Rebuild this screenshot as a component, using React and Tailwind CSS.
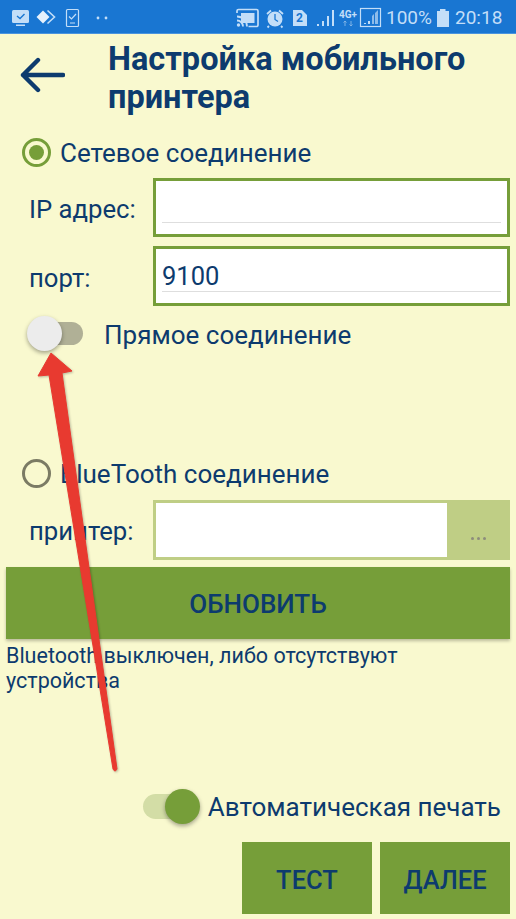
import React from 'react';

const StatusBar = () => (
  <div className="flex h-[34px] w-full shrink-0 items-center border-b border-[#4a94de] bg-[#1976d2] text-[#c3def8]">
    <svg width="516" height="34" viewBox="0 0 516 34" className="absolute left-0 top-0" fill="none">
      {/* monitor with check */}
      <rect x="12" y="10" width="17" height="13" rx="1.5" fill="#c3def8" />
      <rect x="16" y="24.5" width="9" height="1.5" fill="#c3def8" />
      <path d="M17 16l3 2.5 4.5-4.5" stroke="#1976d2" strokeWidth="1.4" />
      {/* diamond and chevron */}
      <path d="M43 10.5l6.5 6.5-6.5 6.5-6.5-6.5z" fill="#e6f1fc" />
      <path d="M47.5 10.5l7 6.5-7 6.5" stroke="#c3def8" strokeWidth="1.6" />
      {/* tablet with check */}
      <rect x="66.5" y="9.5" width="12" height="17" rx="1" stroke="#c3def8" strokeWidth="1.2" />
      <path d="M69 16.5l2.5 2.5 4.5-5" stroke="#c3def8" strokeWidth="1.2" />
      <rect x="70" y="22.5" width="5" height="1" fill="#c3def8" />
      <circle cx="98" cy="18" r="1.4" fill="#c3def8" />
      <circle cx="106" cy="18" r="1.4" fill="#c3def8" />
      {/* cast */}
      <path d="M237 13v-2a1.5 1.5 0 0 1 1.5-1.5h18a1.5 1.5 0 0 1 1.5 1.5v14a1.5 1.5 0 0 1-1.5 1.5h-8" stroke="#c3def8" strokeWidth="1.7" />
      <rect x="241" y="13" width="13.5" height="10" fill="#c3def8" />
      <path d="M237 16.5a10 10 0 0 1 10 10M237 20.5a6 6 0 0 1 6 6" stroke="#c3def8" strokeWidth="1.8" />
      <circle cx="238.5" cy="25" r="1.7" fill="#c3def8" />
      {/* alarm */}
      <circle cx="275" cy="19" r="7.5" fill="#c3def8" />
      <path d="M275 14v5.5l3 2" stroke="#1976d2" strokeWidth="1.3" />
      <path d="M267 14l4-3.5M283 14l-4-3.5M269 26l-1.5 1.5M281 26l1.5 1.5" stroke="#c3def8" strokeWidth="1.8" />
      {/* sim 2 */}
      <path d="M293 10h9l5 5v11h-14z" fill="#c3def8" />
      {/* signal */}
      <g fill="#c3def8">
        <rect x="317" y="24" width="2" height="2" />
        <rect x="322" y="21" width="2" height="5" />
        <rect x="327" y="16" width="2" height="10" />
        <rect x="332" y="10" width="2" height="16" />
      </g>
      {/* data arrows */}
      <path d="M345 26v-5M343.5 22.5l1.5-1.5 1.5 1.5M351 21v5M349.5 24.5l1.5 1.5 1.5-1.5" stroke="#7fb3e6" strokeWidth="1" />
      {/* boxed signal */}
      <rect x="360.5" y="8.5" width="20" height="18" stroke="#c3def8" strokeWidth="1.2" />
      <path d="M364 24h2v-1h-2zM368 24h2v-3h-2z" fill="#c3def8" />
      <path d="M372 24v-8l2-2v10zM375 24v-11l3-3v14z" fill="#8dbcea" />
      {/* battery */}
      <path d="M437 11h3v-2h5.5v2h3.5v16h-12z" fill="#c3def8" />
    </svg>
    <span className="absolute left-[292px] top-[11px] w-[15px] text-center text-[12px] font-bold leading-[15px] text-[#1976d2]">2</span>
    <span className="absolute left-[339px] top-[9px] text-[10px] font-bold leading-[11px] text-[#c3def8]">4G+</span>
    <span className="absolute left-[386px] top-[6px] text-[19px] leading-[24px]">100%</span>
    <span className="absolute left-[455px] top-[6px] text-[19px] leading-[24px]">20:18</span>
  </div>
);

const Radio = ({ checked, label }) => (
  <div className="flex items-center gap-[9px] pl-[22px]">
    {checked ? (
      <span className="flex h-[29px] w-[29px] items-center justify-center rounded-full border-[3px] border-[#769e39]">
        <span className="h-[15px] w-[15px] rounded-full bg-[#769e39]" />
      </span>
    ) : (
      <span className="h-[29px] w-[29px] rounded-full border-[3px] border-[#7b7b64]" />
    )}
    <span className="pt-[1px] text-[26px] leading-[30px]">{label}</span>
  </div>
);

const Field = ({ label, value, height }) => (
  <div className={`flex items-center pr-[6px] ${height}`}>
    <span className="w-[153px] pl-[29px] pt-[3px] text-[25.7px] leading-[30px]">{label}</span>
    <div className="flex h-full flex-1 border-[3px] border-[#769e39] bg-white px-[6px] pb-[11px]">
      <div className="flex h-full w-full items-end border-b border-[#dedede] text-[25.5px] leading-[30px]">{value}</div>
    </div>
  </div>
);

const ActionButton = ({ children, className }) => (
  <button type="button" className={`bg-[#769e39] font-medium uppercase text-[#0d3b6e] ${className}`}>
    {children}
  </button>
);

const App = () => (
  <div className="relative flex h-[919px] w-[516px] flex-col overflow-hidden bg-[#f9f9cf] font-[Roboto,sans-serif] text-[#0d3b6e]">
    <StatusBar />

    {/* Header */}
    <div className="flex h-[90px] pt-[6px]">
      <div className="w-[108px] pl-[20px] pt-[17px]">
        <svg width="45" height="36" viewBox="0 0 45 36" fill="none" stroke="#0d3b6e" strokeWidth="4.4" strokeLinecap="round" strokeLinejoin="round">
          <path d="M43 18H3M18 3L3 18l15 15" />
        </svg>
      </div>
      <h1 className="text-[32.5px] font-bold leading-[38px]">
        Настройка мобильного
        <br />
        принтера
      </h1>
    </div>

    {/* Network connection */}
    <div className="mt-[13px]">
      <Radio checked label="Сетевое соединение" />
    </div>
    <div className="mt-[10px] flex flex-col gap-[9px]">
      <Field label="IP адрес:" height="h-[59px]" />
      <Field label="порт:" value="9100" height="h-[60px]" />
    </div>

    {/* Direct connection toggle */}
    <div className="mt-[10px] flex h-[34px] items-center">
      <div className="relative ml-[44px] h-[23px] w-[39px] rounded-full bg-[#b0b096]">
        <span className="absolute left-[-17px] top-[-6px] h-[35px] w-[35px] rounded-full bg-[#ececec] shadow-[0_2px_4px_rgba(0,0,0,0.35)]" />
      </div>
      <span className="ml-[21px] pt-[3px] text-[26px] leading-[30px]">Прямое соединение</span>
    </div>

    {/* Bluetooth connection */}
    <div className="mt-[108px]">
      <Radio label="BlueTooth соединение" />
    </div>
    <div className="mt-[11px] flex h-[60px] items-center pr-[6px]">
      <span className="w-[153px] pl-[29px] pt-[2px] text-[25.7px] leading-[30px]">принтер:</span>
      <div className="flex h-full flex-1 bg-[#bfce85]">
        <div className="my-[3px] ml-[3px] flex-1 bg-white" />
        <div className="flex w-[63px] items-end justify-center gap-[3px] pb-[20px]">
          <span className="h-[3px] w-[3px] rounded-full bg-[#8d8d7c]" />
          <span className="h-[3px] w-[3px] rounded-full bg-[#8d8d7c]" />
          <span className="h-[3px] w-[3px] rounded-full bg-[#8d8d7c]" />
        </div>
      </div>
    </div>

    <div className="mt-[7px] px-[6px]">
      <ActionButton className="h-[72px] w-full pt-[3px] text-[26px] shadow-[0_2px_3px_rgba(0,0,0,0.25)]">Обновить</ActionButton>
      <p className="mt-[4px] text-[21.5px] leading-[25px]">
        Bluetooth выключен, либо отсутствуют
        <br />
        устройства
      </p>
    </div>

    {/* Auto print toggle */}
    <div className="mt-auto flex h-[35px] items-center justify-end pr-[15px]">
      <div className="relative h-[25px] w-[47px] rounded-full bg-[#d3dda6]">
        <span className="absolute right-[-10px] top-[-5px] h-[35px] w-[35px] rounded-full bg-[#769e39] shadow-[0_2px_4px_rgba(0,0,0,0.35)]" />
      </div>
      <span className="ml-[18px] pt-[1px] text-[26px] leading-[30px]">Автоматическая печать</span>
    </div>

    {/* Footer buttons */}
    <div className="mb-[5px] mt-[18px] flex justify-end gap-[8px] pr-[6px]">
      <ActionButton className="h-[72px] w-[130px] pt-[5px] text-[25.5px]">Тест</ActionButton>
      <ActionButton className="h-[72px] w-[130px] pt-[5px] text-[25.5px]">Далее</ActionButton>
    </div>

    {/* Red annotation arrow drawn over the screen */}
    <svg width="516" height="919" viewBox="0 0 516 919" className="pointer-events-none absolute left-0 top-0 drop-shadow-[1px_1px_1px_rgba(0,0,0,0.25)]">
      <path d="M51 353L72 371 62 373 117 769Q115 773 113 769L49 375 38 376Z" fill="#e83a30" stroke="#e83a30" strokeWidth="1" strokeLinejoin="round" />
    </svg>
  </div>
);

export default App;
